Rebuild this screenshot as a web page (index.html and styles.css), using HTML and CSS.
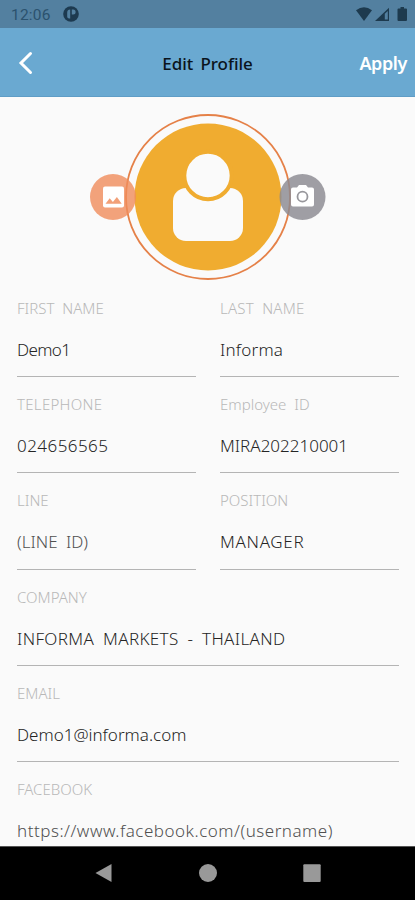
FILE: index.html
```html
<!DOCTYPE html>
<html lang="en">
<head>
<meta charset="utf-8">
<title>Edit Profile</title>
<link rel="stylesheet" href="styles.css">
</head>
<body>
<div class="screen">
  <div class="status-bar">
    <span class="clock">12:06</span>
    <svg class="app-icon" viewBox="0 0 16 16"><circle cx="8" cy="8" r="7.8" fill="#1d3a50"/><path d="M4.200 10.500V6.400Q4.200 3.400 7.200 3.400V12.500Q4.200 12.500 4.200 10.500ZM8.800 3.600h1.300a2.500 2.500 0 0 1 0 5H8.800Z" fill="#5380a0"/></svg>
    <svg class="signals" viewBox="0 0 52 16"><path d="M0 3.2Q8-2.6 16 3.2L8 14Z"/><path d="M33 .8V14H19Z"/><path d="M28.800 6.800L31.800 4V12.500H28.800Z" fill="#5380a0"/><path d="M42.500 1.500h2V0h3.500v1.500h2q1 0 1 1V13q0 1-1 1h-7.500q-1 0-1-1V2.500q0-1 1-1Z"/></svg>
  </div>
  <header class="app-bar">
    <svg class="back" viewBox="0 0 16 24"><path d="M13.500 2.500L4 12l9.500 9.500"/></svg>
    <h1 class="title">Edit Profile</h1>
    <span class="apply">Apply</span>
  </header>
  <main class="content">
    <div class="photo">
      <svg viewBox="0 0 235 166">
        <circle cx="118" cy="83" r="82" fill="#fafafa" stroke="#e58148" stroke-width="1.800"/>
        <circle cx="118" cy="83" r="73.500" fill="#f0ac30"/>
        <rect x="83" y="74" width="70" height="53" rx="13" fill="#fafafa"/>
        <circle cx="118" cy="61.500" r="23.700" fill="#fafafa" stroke="#f0ac30" stroke-width="4"/>
        <circle cx="23" cy="83" r="23" fill="#f08c5b" fill-opacity=".8"/>
        <rect x="13" y="72.500" width="21" height="21" rx="2" fill="#fff"/>
        <path d="M15.500 89.800l4.200-5.500 3.200 3.600 4-5 4.800 6.900Z" fill="#f2a078"/>
        <circle cx="212.500" cy="83" r="23" fill="#8b8a91" fill-opacity=".82"/>
        <path d="M203 73.500h4l2-2.500h7l2 2.500h4q2 0 2 2V90.500q0 2-2 2h-19q-2 0-2-2v-15q0-2 2-2Z" fill="#fff"/>
        <circle cx="212.500" cy="82.700" r="5" fill="#fff" stroke="#98979c" stroke-width="1.800"/>
      </svg>
    </div>
    <div class="form">
      <div class="field"><span class="label">FIRST NAME</span><span class="value demo">Demo1</span></div>
      <div class="field"><span class="label last">LAST NAME</span><span class="value informa">Informa</span></div>
      <div class="field"><span class="label telephone">TELEPHONE</span><span class="value number">024656565</span></div>
      <div class="field"><span class="label">Employee ID</span><span class="value">MIRA202210001</span></div>
      <div class="field"><span class="label">LINE</span><span class="value hint">(LINE ID)</span></div>
      <div class="field"><span class="label">POSITION</span><span class="value manager">MANAGER</span></div>
      <div class="field wide"><span class="label">COMPANY</span><span class="value market">INFORMA MARKETS - THAILAND</span></div>
      <div class="field wide"><span class="label">EMAIL</span><span class="value">Demo1@informa.com</span></div>
      <div class="field wide"><span class="label">FACEBOOK</span><span class="value link hint">https://www.facebook.com/(username)</span></div>
    </div>
  </main>
  <nav class="nav-bar">
    <svg viewBox="0 0 18 20"><path d="M16.500 1v18L.5 10Z"/></svg>
    <svg viewBox="0 0 18 20"><circle cx="9" cy="10" r="9"/></svg>
    <svg viewBox="0 0 18 20"><rect x=".3" y="1.300" width="17.400" height="17.700" rx="1"/></svg>
  </nav>
</div>
</body>
</html>
```

FILE: styles.css
```css
* { box-sizing: border-box; }
body { margin: 0; font-family: "Noto Sans", sans-serif; background: #fafafa; }
svg { display: block; overflow: visible; }
.screen { width: 415px; height: 900px; display: flex; flex-direction: column; overflow: hidden; }
.status-bar { height: 28px; flex: none; display: flex; align-items: center; padding: 0 8px 0 11px; background: #5380a0; }
.clock { font: 400 15.5px/28px Roboto, sans-serif; color: #2b526e; letter-spacing: .2px; padding-top: 1px; }
.app-icon { width: 16px; height: 16px; margin-left: 12px; }
.signals { width: 52px; height: 16px; margin: 1px -1px 0 auto; fill: #1d3a4e; }
.app-bar { height: 69px; flex: none; display: grid; grid-template-columns: 1fr auto 1fr; align-items: center; padding: 2px 8px 0; background: #6aa9d1; border-bottom: 1px solid #5f9dc6; }
.back { width: 16px; height: 24px; margin-left: 9px; fill: none; stroke: #fff; stroke-width: 3; stroke-linecap: round; }
.title { margin: 0; font-size: 17px; font-weight: 500; letter-spacing: -.05px; word-spacing: 3px; color: #0a141c; white-space: nowrap; }
.apply { justify-self: end; font-size: 18px; font-weight: 600; letter-spacing: -.4px; color: #fff; }
.content { flex: 1; min-height: 0; overflow: hidden; padding: 17px 16px 0 17px; }
.photo { width: 235px; height: 166px; margin-left: 73px; }
.form { display: grid; grid-template-columns: 179px 179px; column-gap: 24px; grid-auto-rows: 96.2px; margin-top: 1px; }
.field { display: flex; flex-direction: column; border-bottom: 1px solid #b4b4b4; white-space: nowrap; word-spacing: 4px; }
.wide { grid-column: span 2; }
.label { padding-top: 17px; font-size: 15px; line-height: 20px; font-weight: 300; color: #b8b8b8; }
.value { margin-top: 20px; font-size: 17px; line-height: 24px; font-weight: 300; color: #252525; }
.hint { color: #505050; }
.last { letter-spacing: .25px; }
.telephone { letter-spacing: .3px; }
.demo { letter-spacing: -.6px; }
.informa { letter-spacing: .2px; }
.number { letter-spacing: .45px; }
.manager { letter-spacing: .7px; }
.market { letter-spacing: .36px; }
.link { letter-spacing: .51px; }
.nav-bar { height: 54px; flex: none; display: flex; justify-content: center; gap: 86px; padding-top: 16px; background: #000; border-top: 1px solid #555; }
.nav-bar svg { width: 18px; height: 20px; fill: #999; }
```
